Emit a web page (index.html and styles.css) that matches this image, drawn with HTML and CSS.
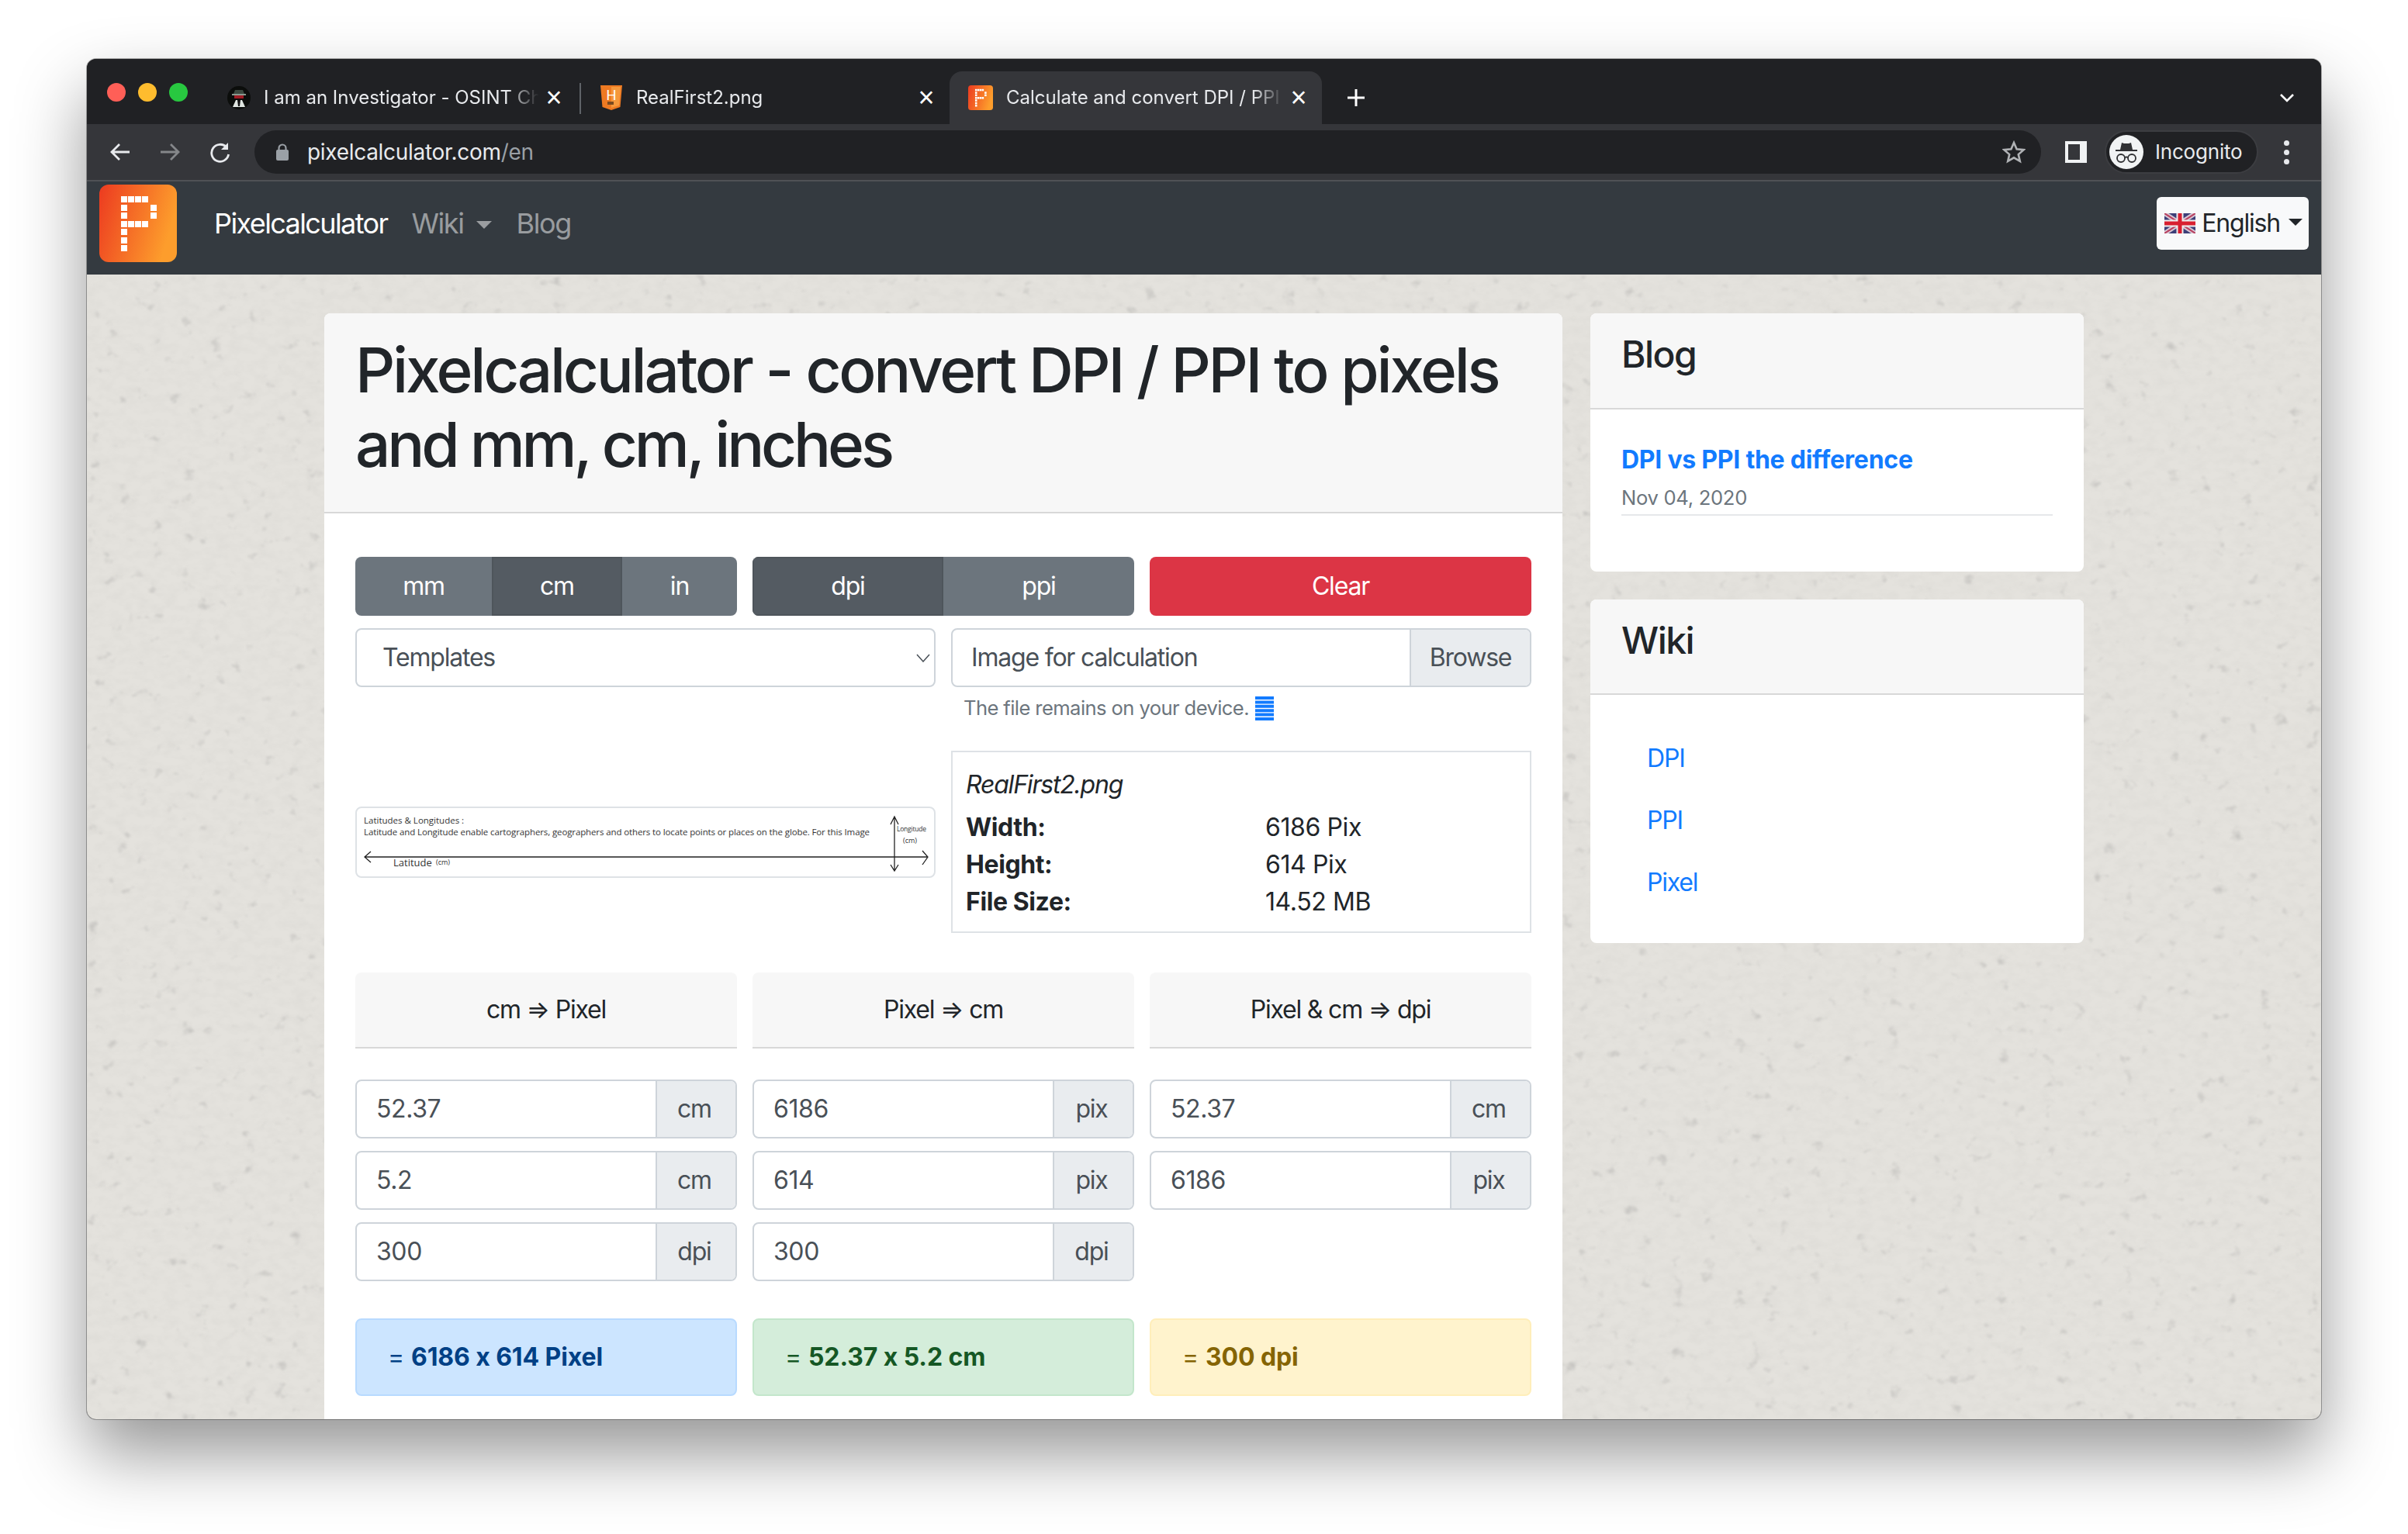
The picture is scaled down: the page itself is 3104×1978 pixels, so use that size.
FILE: index.html
```html
<!DOCTYPE html>
<html lang="en">
<head>
<meta charset="UTF-8">
<title>Calculate and convert DPI / PPI to pixels</title>
<link rel="stylesheet" href="styles.css">
</head>
<body>
<div class="window">

    <div class="tabstrip">
        <div class="lights"><i class="red"></i><i class="yellow"></i><i class="green"></i></div>
        <div class="tab">
            <svg class="favicon" viewBox="0 0 30 30"><ellipse cx="15" cy="15" rx="15" ry="15" fill="#0b0d0b"/><path d="M8 10l2-5h10l2 5z" fill="#3c4a40"/><rect x="6" y="10" width="18" height="2" fill="#8a9a90"/><rect x="9" y="12" width="12" height="4" fill="#a01c24"/><path d="M7 27l4-9h8l4 9z" fill="#dfe5e0"/><path d="M13 18h4l-1 8h-2z" fill="#111"/></svg>
            <span class="tab-title">I am an Investigator - OSINT Ch</span>
            <span class="tab-close">&#215;</span>
        </div>
        <div class="tab tab-sep">
            <svg class="favicon" viewBox="0 0 28 32"><path d="M0 0h28l-2.5 28L14 32 2.5 28z" fill="#ee7a22"/><path d="M14 2h12l-2 24-10 3z" fill="#f5983c"/><text x="14" y="19" font-size="18" text-anchor="middle" fill="#fff" font-family="Liberation Sans">H</text><rect x="9" y="21" width="8" height="4" fill="#7a4a20"/></svg>
            <span class="tab-title">RealFirst2.png</span>
            <span class="tab-close">&#215;</span>
        </div>
        <div class="tab tab-active">
            <svg class="favicon" viewBox="0 0 100 100"><use href="#logo"/></svg>
            <span class="tab-title">Calculate and convert DPI / PPI</span>
            <span class="tab-close">&#215;</span>
        </div>
        <svg class="newtab" viewBox="0 0 24 24"><path d="M12 1v22M1 12h22" stroke="#fff" stroke-width="3"/></svg>
        <svg class="tabs-menu" viewBox="0 0 20 14"><path d="M2 3l8 8 8-8" fill="none" stroke="#fff" stroke-width="2.6"/></svg>
    </div>

    <div class="toolbar">
        <svg class="tool" viewBox="0 0 28 28"><path d="M26 14H4M13 4L3 14l10 10" fill="none" stroke="#e8eaed" stroke-width="2.8"/></svg>
        <svg class="tool" viewBox="0 0 28 28"><path d="M2 14h22M15 4l10 10-10 10" fill="none" stroke="#85878a" stroke-width="2.8"/></svg>
        <svg class="tool" viewBox="0 0 28 28"><path d="M23 8a11 11 0 1 0 2.6 9" fill="none" stroke="#e8eaed" stroke-width="2.8"/><path d="M25 2v9h-9z" fill="#e8eaed"/></svg>
        <div class="omnibox">
            <svg class="lock" viewBox="0 0 18 22"><path d="M4.500 9V6a4.500 4.500 0 0 1 9 0v3" fill="none" stroke="#9aa0a6" stroke-width="2.200"/><rect x="1" y="8" width="16" height="14" rx="2" fill="#9aa0a6"/></svg>
            <span class="url">pixelcalculator.com<span class="url-path">/en</span></span>
            <svg class="star" viewBox="0 0 30 30"><path d="M15 3l3.600 8.300 9 .8-6.800 6 2 8.800L15 22.300 7.200 26.900l2-8.800-6.800-6 9-.8z" fill="none" stroke="#b0b2b5" stroke-width="2.600"/></svg>
        </div>
        <div class="sidepanel"></div>
        <div class="profile">
            <svg class="avatar" viewBox="0 0 44 44"><circle cx="22" cy="22" r="22" fill="#f1f3f4"/><path d="M14 19l2-9c2 1 4 1 6 1s4 0 6-1l2 9z" fill="#303134"/><rect x="8" y="19" width="28" height="2" fill="#303134"/><circle cx="15" cy="30" r="5" fill="none" stroke="#303134" stroke-width="1.800"/><circle cx="29" cy="30" r="5" fill="none" stroke="#303134" stroke-width="1.800"/><path d="M20 29q2-1 4 0" fill="none" stroke="#303134" stroke-width="1.800"/></svg>
            <span>Incognito</span>
        </div>
        <div class="kebab"><i></i><i></i><i></i></div>
    </div>

    <nav class="navbar">
        <svg class="logo" viewBox="0 0 100 100">
            <defs>
                <linearGradient id="logo-grad" x1="0" y1="0" x2="1" y2="0.3"><stop offset="0" stop-color="#ec3a20"/><stop offset="1" stop-color="#fd9d2c"/></linearGradient>
                <g id="logo">
                    <rect width="100" height="100" rx="12" fill="url(#logo-grad)"/>
                    <g fill="#fff">
                        <rect x="28" y="15" width="8" height="8"/><rect x="37" y="15" width="8" height="8"/><rect x="46" y="15" width="8" height="8"/><rect x="55" y="15" width="8" height="8"/>
                        <rect x="28" y="26" width="8" height="8"/><rect x="66" y="26" width="8" height="8"/>
                        <rect x="28" y="36" width="8" height="8"/><rect x="66" y="36" width="8" height="8"/>
                        <rect x="28" y="47" width="8" height="8"/><rect x="37" y="47" width="8" height="8"/><rect x="46" y="47" width="8" height="8"/><rect x="55" y="47" width="8" height="8"/>
                        <rect x="28" y="57" width="8" height="8"/>
                        <rect x="28" y="68" width="8" height="8"/>
                        <rect x="28" y="78" width="8" height="8"/>
                    </g>
                </g>
            </defs>
            <use href="#logo"/>
        </svg>
        <a class="brand">Pixelcalculator</a>
        <a class="nav-link caret-after">Wiki</a>
        <a class="nav-link">Blog</a>
        <div class="lang-btn">
            <svg class="flag" viewBox="0 0 40 26"><rect width="40" height="26" fill="#3d3f78"/><path d="M0 0l40 26M40 0L0 26" stroke="#d8c8d4" stroke-width="6"/><path d="M0 0l40 26M40 0L0 26" stroke="#b84060" stroke-width="2"/><path d="M20 0v26M0 13h40" stroke="#eee" stroke-width="9"/><path d="M20 0v26M0 13h40" stroke="#d81f30" stroke-width="5"/></svg>
            <span class="caret-after">English</span>
        </div>
    </nav>

    <div class="page">
        <svg class="texture" width="100%" height="100%">
            <filter id="paper" x="0" y="0" width="100%" height="100%">
                <feTurbulence type="fractalNoise" baseFrequency="0.06 0.09" numOctaves="4" seed="7"/>
                <feColorMatrix values="0 0 0 0 0.62  0 0 0 0 0.61  0 0 0 0 0.58  0.45 0 0 0 -0.16"/>
            </filter>
            <filter id="specks" x="0" y="0" width="100%" height="100%">
                <feTurbulence type="fractalNoise" baseFrequency="0.05 0.06" numOctaves="3" seed="11"/>
                <feColorMatrix values="0 0 0 0 0.55  0 0 0 0 0.54  0 0 0 0 0.52  0 3.5 0 0 -2.35"/>
                <feGaussianBlur stdDeviation="0.8"/>
            </filter>
            <rect width="100%" height="100%" filter="url(#paper)"/>
            <rect width="100%" height="100%" filter="url(#specks)"/>
        </svg>

        <main class="card card-main">
            <div class="card-header">
                <h1>Pixelcalculator - convert DPI / PPI to pixels <span class="h1-rest">and mm, cm, inches</span></h1>
            </div>
            <div class="card-body">
                <div class="three-col">
                    <div class="btn-group">
                        <span class="btn w-mm">mm</span><span class="btn btn-on w-cm">cm</span><span class="btn w-in">in</span>
                    </div>
                    <div class="btn-group">
                        <span class="btn btn-on w-half">dpi</span><span class="btn w-half">ppi</span>
                    </div>
                    <span class="btn-clear">Clear</span>
                </div>

                <div class="two-col row-form">
                    <div class="control">
                        <span class="control-text">Templates</span>
                        <svg class="select-arrow" viewBox="0 0 18 11"><path d="M1 1l8 9 8-9" fill="none" stroke="#495057" stroke-width="1.500"/></svg>
                    </div>
                    <div>
                        <div class="control file-control">
                            <span class="control-text">Image for calculation</span>
                            <span class="browse">Browse</span>
                        </div>
                        <p class="hint">The file remains on your device.
                            <svg class="hint-icon" viewBox="0 0 24 31"><path d="M0 0h24v4H0zM0 5.400h24v4H0zM0 10.800h24v4H0zM0 16.200h24v4H0zM0 21.600h24v4H0zM0 27h24v4H0z" fill="#127bff"/></svg>
                        </p>
                    </div>
                </div>

                <div class="two-col row-preview">
                    <div class="thumb">
                        <svg width="744" height="88" viewBox="0 0 744 88">
                            <g font-family="Open Sans" fill="#333">
                                <text x="9" y="20" font-size="11.500">Latitudes &amp; Longitudes :</text>
                                <text x="9" y="35" font-size="11.500" textLength="652">Latitude and Longitude enable cartographers, geographers and others to locate points or places on the globe. For this Image</text>
                                <text x="47" y="75" font-size="13">Latitude</text>
                                <text x="102" y="73" font-size="9">(cm)</text>
                                <text x="696" y="30" font-size="8.500" textLength="38">Longitude</text>
                                <text x="704" y="45" font-size="9">(cm)</text>
                            </g>
                            <path d="M10 63h725M18 56l-8 7 8 7M729 55l7 8-7 10M693 11v70M688 21l5-10 5 10M688 73l5 8 5-8" fill="none" stroke="#222" stroke-width="1.300"/>
                        </svg>
                    </div>
                    <div class="info">
                        <div class="info-name">RealFirst2.png</div>
                        <div class="info-row"><b>Width:</b><span>6186 Pix</span></div>
                        <div class="info-row"><b>Height:</b><span>614 Pix</span></div>
                        <div class="info-row"><b>File Size:</b><span>14.52 MB</span></div>
                    </div>
                </div>

                <div class="three-col row-calc">
                    <div class="calc">
                        <div class="calc-head">cm &rArr; Pixel</div>
                        <div class="field"><span>52.37</span><em>cm</em></div>
                        <div class="field"><span>5.2</span><em>cm</em></div>
                        <div class="field"><span>300</span><em>dpi</em></div>
                    </div>
                    <div class="calc">
                        <div class="calc-head">Pixel &rArr; cm</div>
                        <div class="field"><span>6186</span><em>pix</em></div>
                        <div class="field"><span>614</span><em>pix</em></div>
                        <div class="field"><span>300</span><em>dpi</em></div>
                    </div>
                    <div class="calc">
                        <div class="calc-head">Pixel &amp; cm &rArr; dpi</div>
                        <div class="field"><span>52.37</span><em>cm</em></div>
                        <div class="field"><span>6186</span><em>pix</em></div>
                    </div>
                </div>

                <div class="three-col row-result">
                    <div class="alert alert-blue">= <b>6186 x 614 Pixel</b></div>
                    <div class="alert alert-green">= <b>52.37 x 5.2 cm</b></div>
                    <div class="alert alert-yellow">= <b>300 dpi</b></div>
                </div>
            </div>
        </main>

        <aside class="sidebar">
            <section class="card">
                <div class="card-header"><h4>Blog</h4></div>
                <div class="blog-body">
                    <a class="post-title">DPI vs PPI the difference</a>
                    <div class="post-date">Nov 04, 2020</div>
                </div>
            </section>
            <section class="card">
                <div class="card-header"><h4>Wiki</h4></div>
                <ul class="wiki-list">
                    <li>DPI</li>
                    <li>PPI</li>
                    <li>Pixel</li>
                </ul>
            </section>
        </aside>
    </div>
</div>
</body>
</html>
```
FILE: styles.css
```css
* {
    box-sizing: border-box;
}
html, body {
    height: 1978px;
    overflow: hidden;
}
body {
    margin: 0;
    padding: 76px 112px 0;
    background-color: #fff;
    color: #212529;
    font-family: Inter, "Noto Sans", sans-serif;
    font-size: 32px;
    line-height: 48px;
    letter-spacing: -1.2px;
    font-feature-settings: "calt" 0;
}

/* browser window */
.window {
    width: 2880px;
    height: 1754px;
    display: flex;
    flex-direction: column;
    overflow: hidden;
    border-radius: 12px;
    background-color: #202124;
    box-shadow: 0 44px 90px rgba(0,0,0,0.42), 0 0 0 1px rgba(0,0,0,0.3);
}

.tabstrip {
    height: 84px;
    flex: none;
    display: flex;
    align-items: flex-end;
    background-color: #202124;
    letter-spacing: 0;
}
.lights {
    width: 152px;
    height: 68px;
    display: flex;
    gap: 16px;
    padding: 15px 0 0 26px;
    flex: none;
}
.lights i {
    width: 24px;
    height: 24px;
    border-radius: 50%;
}
.lights .red { background-color: #ff5f57; }
.lights .yellow { background-color: #febc2e; }
.lights .green { background-color: #28c840; }

.tab {
    position: relative;
    width: 480px;
    height: 68px;
    flex: none;
    display: flex;
    align-items: center;
    padding: 0 18px 0 29px;
    color: #e8eaed;
    font-size: 24px;
    white-space: nowrap;
}
.tab-sep::before {
    content: "";
    position: absolute;
    left: 3px;
    top: 15px;
    width: 2px;
    height: 40px;
    background-color: #5f6368;
}
.tab-active {
    background-color: #35363a;
    border-radius: 16px 16px 0 0;
    padding-left: 24px;
}
.favicon {
    width: 30px;
    height: 32px;
    flex: none;
    margin-right: 17px;
}
.tab-active .favicon {
    width: 32px;
}
.tab-title {
    flex: 1;
    min-width: 0;
    overflow: hidden;
    -webkit-mask-image: linear-gradient(to right, #000 88%, transparent 99%);
    mask-image: linear-gradient(to right, #000 88%, transparent 99%);
}
.tab-close {
    width: 24px;
    flex: none;
    margin-left: 4px;
    text-align: center;
    color: #fff;
    font-size: 36px;
    font-weight: 300;
    font-family: "Liberation Sans", sans-serif;
}
.newtab {
    width: 24px;
    height: 24px;
    margin: 0 0 22px 32px;
    flex: none;
}
.tabs-menu {
    width: 20px;
    height: 14px;
    flex: none;
    margin: 0 34px 27px auto;
}

.toolbar {
    height: 72px;
    flex: none;
    display: flex;
    align-items: center;
    padding-left: 29px;
    background-color: #35363a;
    letter-spacing: 0;
}
.tool {
    width: 28px;
    height: 28px;
    flex: none;
    margin-right: 36px;
}
.omnibox {
    width: 2303px;
    height: 56px;
    margin-left: -5px;
    flex: none;
    display: flex;
    align-items: center;
    padding: 0 20px 0 27px;
    border-radius: 28px;
    background-color: #202124;
    color: #e8eaed;
    font-size: 28px;
}
.lock {
    width: 18px;
    height: 22px;
    flex: none;
    margin-right: 23px;
}
.url {
    letter-spacing: -0.3px;
}
.url-path {
    color: #9aa0a6;
}
.star {
    width: 30px;
    height: 30px;
    margin-left: auto;
}
.sidepanel {
    width: 28px;
    height: 28px;
    flex: none;
    margin-left: 31px;
    border: 4px solid #f1f3f4;
    border-right-width: 9px;
    background-color: #35363a;
}
.profile {
    width: 198px;
    height: 56px;
    flex: none;
    margin-left: 23px;
    display: flex;
    align-items: center;
    gap: 15px;
    padding-left: 4px;
    border-radius: 28px;
    border: 2px solid #3c3d41;
    background-color: #202124;
    color: #e8eaed;
    font-size: 26px;
    letter-spacing: -0.2px;
}
.avatar {
    width: 44px;
    height: 44px;
    flex: none;
}
.kebab {
    display: flex;
    flex-direction: column;
    gap: 5px;
    margin-left: 33px;
}
.kebab i {
    width: 7px;
    height: 7px;
    border-radius: 50%;
    background-color: #e8eaed;
}

/* site navbar */
.navbar {
    height: 122px;
    flex: none;
    display: flex;
    align-items: center;
    padding: 0 16px 12px;
    border-top: 2px solid #4f5256;
    background-color: #343a40;
}
.logo {
    width: 100px;
    height: 100px;
    flex: none;
    margin-right: 48px;
}
.brand {
    color: #fff;
    font-size: 36px;
    letter-spacing: -1.6px;
    margin-right: 31px;
}
.nav-link {
    color: rgba(255,255,255,0.5);
    font-size: 36px;
    letter-spacing: -1.4px;
    margin-right: 32px;
}
.caret-after::after {
    content: "";
    display: inline-block;
    margin-left: 16px;
    vertical-align: 6px;
    border-top: 10px solid;
    border-left: 10px solid transparent;
    border-right: 10px solid transparent;
}
.lang-btn {
    height: 68px;
    margin-left: auto;
    display: flex;
    align-items: center;
    padding: 0 8px 0 10px;
    border-radius: 6px;
    background-color: #f8f9fa;
    color: #212529;
}
.flag {
    width: 40px;
    height: 26px;
    margin-right: 8px;
    filter: blur(0.6px);
}
.lang-btn .caret-after::after {
    margin-left: 11px;
    border-top-width: 9px;
    border-left-width: 9px;
    border-right-width: 9px;
    vertical-align: 8px;
}

/* page */
.page {
    position: relative;
    flex: 1;
    display: flex;
    align-items: flex-start;
    gap: 36px;
    padding: 50px 0 0 306px;
    overflow: hidden;
    background-color: #e4e2dd;
}
.texture {
    position: absolute;
    left: 0;
    top: 0;
}
.card {
    position: relative;
    background-color: #fff;
    border-radius: 8px;
    overflow: hidden;
}
.card-main {
    width: 1596px;
    flex: none;
}
.card-header {
    padding: 24px 40px;
    background-color: #f7f7f7;
    border-bottom: 2px solid rgba(0,0,0,0.125);
}
h1, h4 {
    margin: 0 0 16px;
    font-weight: 500;
    line-height: 1.2;
    color: #212529;
}
h1 {
    padding-top: 1px;
    margin-bottom: 15px;
    font-size: 80px;
    letter-spacing: -3.27px;
}
.h1-rest {
    letter-spacing: -4.17px;
}
h4 {
    font-size: 48px;
    letter-spacing: -1.5px;
}
.card-body {
    padding: 56px 40px 60px;
}
.three-col {
    display: grid;
    grid-template-columns: repeat(3, 1fr);
    gap: 20px;
}
.two-col {
    display: grid;
    grid-template-columns: 1fr 1fr;
    gap: 20px;
}
.btn-group {
    display: flex;
    height: 76px;
    border-radius: 8px;
    overflow: hidden;
}
.btn, .btn-clear {
    height: 76px;
    display: flex;
    align-items: center;
    justify-content: center;
    color: #fff;
    background-color: #6c757d;
}
.btn-on {
    background-color: #545b62;
    box-shadow: inset 0 0 0 2px #4e555b;
}
.w-mm { width: 176px; }
.w-cm { width: 168px; }
.w-in { width: 148px; }
.w-half { width: 50%; }
.btn-clear {
    background-color: #dc3545;
    border-radius: 8px;
}

.row-form {
    margin-top: 16px;
}
.control {
    height: 76px;
    display: flex;
    align-items: center;
    justify-content: space-between;
    border: 2px solid #ced4da;
    border-radius: 8px;
    color: #495057;
}
.control-text {
    padding-left: 33px;
}
.file-control {
    overflow: hidden;
}
.file-control .control-text {
    padding-left: 24px;
}
.browse {
    width: 155px;
    height: 100%;
    display: flex;
    align-items: center;
    justify-content: center;
    border-left: 2px solid #ced4da;
    background-color: #e9ecef;
}
.select-arrow {
    width: 18px;
    height: 11px;
    margin-right: 5px;
}
.hint {
    margin: 3px 0 0;
    padding-left: 16px;
    height: 48px;
    display: flex;
    align-items: center;
    gap: 8px;
    color: #6c757d;
    font-size: 25.6px;
    letter-spacing: -0.6px;
}
.hint-icon {
    width: 24px;
    height: 31px;
}
.row-preview {
    margin-top: 31px;
    align-items: center;
}
.thumb {
    height: 92px;
    border: 2px solid #dee2e6;
    border-radius: 8px;
    overflow: hidden;
    letter-spacing: 0;
}
.thumb svg {
    display: block;
}
.info {
    height: 235px;
    padding: 18px 17px 0;
    border: 2px solid #dee2e6;
}
.info-name {
    font-style: italic;
    margin-bottom: 7px;
}
.info-row {
    display: grid;
    grid-template-columns: 386px 1fr;
    letter-spacing: -0.4px;
}
.info-row b {
    font-weight: 700;
}
.row-calc {
    margin-top: 51px;
}
.calc {
    display: flex;
    flex-direction: column;
    gap: 16px;
}
.calc-head {
    height: 98px;
    margin-bottom: 24px;
    display: flex;
    align-items: center;
    justify-content: center;
    background-color: #f7f7f7;
    border-bottom: 2px solid rgba(0,0,0,0.125);
    border-radius: 8px 8px 0 0;
}
.field {
    height: 76px;
    display: flex;
    align-items: center;
    border: 2px solid #ced4da;
    border-radius: 8px;
    overflow: hidden;
    color: #495057;
}
.field span {
    flex: 1;
    padding-left: 25px;
    letter-spacing: -0.4px;
}
.field em {
    width: 103px;
    height: 100%;
    display: flex;
    align-items: center;
    justify-content: center;
    padding-right: 5px;
    font-style: normal;
    border-left: 2px solid #ced4da;
    background-color: #e9ecef;
}
.row-result {
    margin-top: 48px;
}
.alert {
    height: 100px;
    padding: 24px 40px;
    border: 2px solid;
    border-radius: 8px;
    letter-spacing: -0.1px;
}
.alert-blue { background-color: #cce5ff; border-color: #b8daff; color: #004085; }
.alert-green { background-color: #d4edda; border-color: #c3e6cb; color: #155724; }
.alert-yellow { background-color: #fff3cd; border-color: #ffeeba; color: #856404; }

/* sidebar */
.sidebar {
    width: 636px;
    flex: none;
    display: flex;
    flex-direction: column;
    gap: 36px;
}
.blog-body {
    height: 209px;
    padding: 41px 40px 0;
}
.post-title {
    display: block;
    color: #127bff;
    font-weight: 700;
    line-height: 48px;
    letter-spacing: -0.25px;
}
.post-date {
    padding-bottom: 2px;
    margin-top: 6px;
    border-bottom: 2px solid #e6e8ea;
    color: #6c757d;
    font-size: 25.6px;
    line-height: 38px;
    letter-spacing: -0.3px;
}
.wiki-list {
    margin: 0;
    padding: 42px 0 0 73px;
    height: 320px;
    list-style: none;
    color: #127bff;
}
.wiki-list li {
    height: 80px;
    line-height: 80px;
}
```
